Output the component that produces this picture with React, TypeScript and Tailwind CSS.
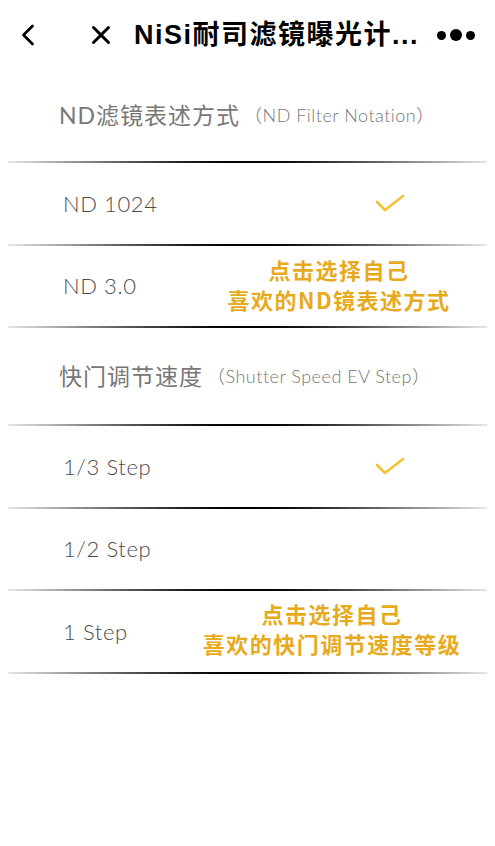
import { ChevronLeft, X } from 'lucide-react';

const CJK = '"Noto Sans CJK SC", sans-serif';
const LATIN = 'Lato, "Noto Sans CJK SC", sans-serif';

function Divider() {
  return <div className="mx-2 h-[2px] bg-gradient-to-r from-gray-200 via-black to-gray-200" />;
}

function Check() {
  return (
    <svg width="30" height="20" viewBox="0 0 30 20" className="mr-[90px]">
      <polyline points="2,9 10,17 28,3" fill="none" stroke="#f2c232" strokeWidth="2.6" strokeLinecap="round" strokeLinejoin="round" />
    </svg>
  );
}

function Row({ label, checked, children }: { label: string; checked?: boolean; children?: React.ReactNode }) {
  return (
    <>
      <div className="relative h-[80.5px] flex items-center justify-between pl-[63px]">
        <span className="text-[22px] font-light tracking-[0.6px] text-[#4d4d4d]" style={{ fontFamily: LATIN }}>{label}</span>
        {checked && <Check />}
        {children}
      </div>
      <Divider />
    </>
  );
}

function Tip({ lines, className }: { lines: string[]; className: string }) {
  return (
    <div
      className={`absolute text-center font-bold text-[22px] leading-[30px] text-[#e7aa1d] tracking-[1.5px] ${className}`}
      style={{ fontFamily: CJK }}
    >
      {lines.map(l => <div key={l}>{l}</div>)}
    </div>
  );
}

function Section({ zh, en, h }: { zh: string; en: string; h: string }) {
  return (
    <>
      <div className={`${h} flex items-center pl-[59px] text-[#777]`} style={{ fontFamily: LATIN }}>
        <span className="text-[23px] tracking-[1px]">{zh}</span>
        <span className="text-[18px] font-light tracking-[0.5px] ml-1">（{en}）</span>
      </div>
      <Divider />
    </>
  );
}

export default function App() {
  return (
    <div className="w-[495px] h-[846px] bg-white overflow-hidden">
      <div className="h-[70px] flex items-center pl-[10px] pr-[20px]">
        <ChevronLeft className="w-[36px] h-[36px] text-black" strokeWidth={1.8} />
        <X className="w-[30px] h-[30px] ml-[40px] text-black" strokeWidth={2.4} />
        <span className="ml-[18px] text-[27px] font-bold tracking-[1.5px] text-black" style={{ fontFamily: 'Arial, "Liberation Sans", "Noto Sans CJK SC", sans-serif' }}>
          NiSi耐司滤镜曝光计...
        </span>
        <div className="ml-auto flex items-center gap-[4px]">
          <span className="w-[9px] h-[9px] rounded-full bg-black" />
          <span className="w-[12px] h-[12px] rounded-full bg-black" />
          <span className="w-[9px] h-[9px] rounded-full bg-black" />
        </div>
      </div>

      <Section zh="ND滤镜表述方式" en="ND Filter Notation" h="h-[91px]" />
      <Row label="ND 1024" checked />
      <Row label="ND 3.0">
        <Tip lines={['点击选择自己', '喜欢的ND镜表述方式']} className="left-[220px] w-[238px] top-[8px]" />
      </Row>

      <Section zh="快门调节速度" en="Shutter Speed EV Step" h="h-[96px]" />
      <Row label="1/3 Step" checked />
      <Row label="1/2 Step" />
      <Row label="1 Step">
        <Tip lines={['点击选择自己', '喜欢的快门调节速度等级']} className="left-[182px] w-[300px] top-[7px]" />
      </Row>
    </div>
  );
}
